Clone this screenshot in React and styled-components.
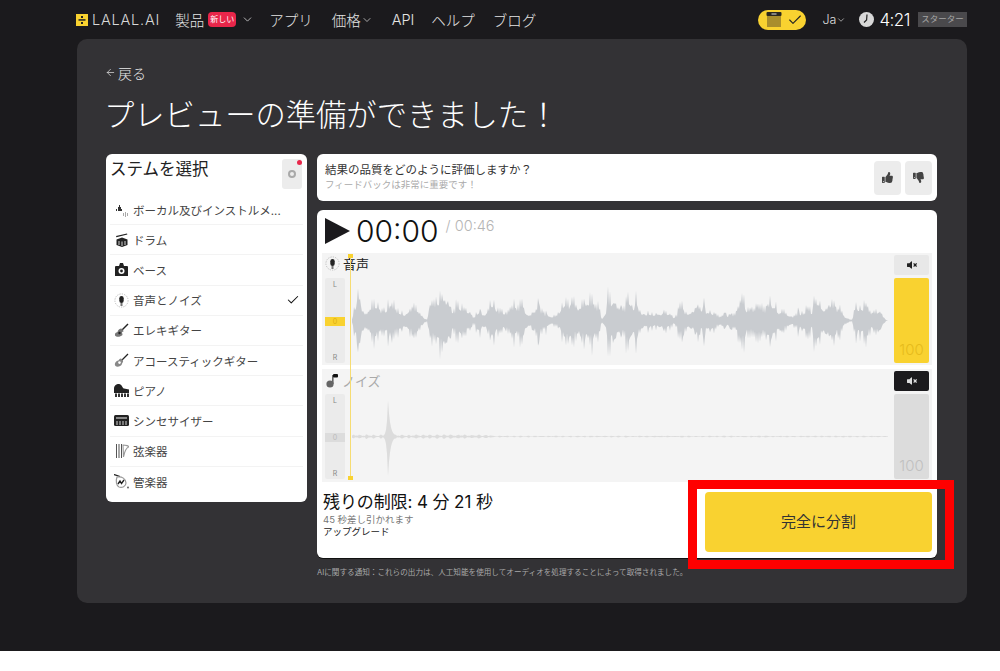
import React from 'react';
import styled, { createGlobalStyle } from 'styled-components';
import { ChevronDown, ArrowLeft, Check } from 'lucide-react';
import { FaThumbsUp, FaThumbsDown, FaVolumeMute } from 'react-icons/fa';

const FONT = `Inter, "Noto Sans CJK JP", "Noto Sans", sans-serif`;

const GlobalStyle = createGlobalStyle`
  html, body { margin: 0; padding: 0; background: #fff; }
  body { font-family: ${FONT}; }
  * { box-sizing: border-box; }
`;

const Page = styled.div`
  position: relative;
  width: 1000px;
  height: 651px;
  background: #1b1a1d;
  overflow: hidden;
`;

const Header = styled.header`
  height: 39px;
  padding: 0 33px 0 76px;
  display: flex;
  align-items: center;
  justify-content: space-between;
`;

const HeaderSide = styled.div`
  display: flex;
  align-items: center;
`;

const Brand = styled.div`
  display: flex;
  align-items: center;
  gap: 4px;
  margin-right: 15px;
  color: #d8d8d8;
  font-size: 14.5px;
  font-weight: 300;
  letter-spacing: 0.8px;
`;

const NavItem = styled.span`
  display: flex;
  align-items: center;
  margin-right: ${(p) => p.$gap}px;
  color: #e4e4e4;
  font-size: 14.5px;
  font-weight: 300;
  white-space: nowrap;
`;

const NewBadge = styled.span`
  width: 28px;
  height: 15px;
  margin: 0 5px 0 4px;
  border-radius: 4px;
  background: #e8264a;
  color: #fff;
  font-size: 8px;
  line-height: 15px;
  text-align: center;
`;

const Toggle = styled.div`
  width: 48px;
  height: 20px;
  margin-right: 16px;
  padding: 0 3px 0 8px;
  border-radius: 10px;
  background: #f9d230;
  display: flex;
  align-items: center;
  justify-content: space-between;
  color: #222;
`;

const LangPick = styled.span`
  display: flex;
  align-items: center;
  width: 37px;
  color: #ddd;
  font-size: 12.5px;
  font-weight: 300;
`;

const Clock = styled.span`
  color: #fff;
  font-size: 17px;
  font-weight: 300;
  letter-spacing: -0.5px;
  margin: 0 8px 0 5px;
`;

const PlanTag = styled.span`
  width: 49px;
  height: 15px;
  background: #4a494c;
  color: #a5a5a5;
  font-size: 8.5px;
  line-height: 15px;
  text-align: center;
`;

const Card = styled.main`
  width: 890px;
  height: 564px;
  margin-left: 77px;
  padding: 24px 30px 0 29px;
  border-radius: 10px;
  background: #333235;
`;

const BackLink = styled.div`
  display: flex;
  align-items: center;
  gap: 2px;
  height: 19px;
  margin-left: -1px;
  color: #e8e8e8;
  font-size: 14px;
  font-weight: 300;
`;

const Title = styled.h1`
  margin: 15px 0 20px -2px;
  height: 37px;
  color: #fff;
  font-size: 30.3px;
  line-height: 37px;
  font-weight: 300;
  white-space: nowrap;
`;

const Columns = styled.div`
  display: flex;
  align-items: flex-start;
  gap: 10px;
`;

const StemPanel = styled.aside`
  width: 201px;
  height: 348px;
  border-radius: 6px;
  background: #fff;
  padding: 5px 4px 0 4px;
`;

const StemHead = styled.div`
  display: flex;
  justify-content: space-between;
  height: 36px;
`;

const StemTitle = styled.div`
  color: #222;
  font-size: 16.5px;
  font-weight: 400;
  line-height: 20px;
`;

const SettingsBtn = styled.div`
  position: relative;
  width: 20px;
  height: 30px;
  margin-right: 1px;
  border-radius: 3px;
  background: #ececec;
  display: flex;
  align-items: center;
  justify-content: center;
  &::before {
    content: '';
    width: 4px;
    height: 4px;
    border: 2px solid #a9a9a9;
    border-radius: 50%;
  }
  &::after {
    content: '';
    position: absolute;
    top: 1px;
    right: 0;
    width: 5px;
    height: 5px;
    border-radius: 50%;
    background: #e8264a;
  }
`;

const StemRow = styled.div`
  height: 30.2px;
  display: flex;
  align-items: center;
  gap: 3px;
  padding: 0 3px 0 3px;
  color: #444;
  font-size: 11.5px;
  font-weight: 400;
  white-space: nowrap;
  border-bottom: ${(p) => (p.$last ? 'none' : '1px solid #f3f3f3')};
`;

const StemLabel = styled.span`
  flex: 1;
`;

const IconSlot = styled.span`
  width: 17px;
  height: 17px;
  flex: none;
  display: flex;
  align-items: center;
  justify-content: center;
  color: #222;
`;

const RightCol = styled.div`
  width: 620px;
  display: flex;
  flex-direction: column;
  gap: 9px;
`;

const FeedbackCard = styled.section`
  height: 47px;
  padding: 0 5px 0 8px;
  border-radius: 6px;
  background: #fff;
  display: flex;
  align-items: center;
  justify-content: space-between;
`;

const FeedbackText = styled.div`
  color: #333;
  font-size: 11.5px;
  font-weight: 400;
  line-height: 15px;
  margin-top: -1px;
  small {
    display: block;
    color: #aaa;
    font-size: 9.5px;
    line-height: 13px;
  }
`;

const ThumbGroup = styled.div`
  display: flex;
  gap: 4px;
`;

const ThumbBtn = styled.div`
  width: 27px;
  height: 34px;
  border-radius: 4px;
  background: #ececec;
  color: #444;
  display: flex;
  align-items: center;
  justify-content: center;
`;

const PlayerCard = styled.section`
  height: 348px;
  border-radius: 6px;
  background: #fff;
  box-shadow: 0 1px 0 #111;
`;

const TimeRow = styled.div`
  height: 43px;
  padding: 6px 0 0 8px;
  display: flex;
  align-items: flex-start;
  color: #111;
`;

const PlayIcon = styled.div`
  width: 0;
  height: 0;
  margin: 2px 6px 0 0;
  border-style: solid;
  border-width: 13px 0 13px 25px;
  border-color: transparent transparent transparent #1b1a1d;
`;

const TimeNow = styled.span`
  font-size: 30px;
  font-weight: 300;
  line-height: 30px;
`;

const TimeTotal = styled.span`
  margin: 1px 0 0 7px;
  color: #b5b5b5;
  font-size: 14.5px;
  font-weight: 300;
`;

const Tracks = styled.div`
  position: relative;
  margin: 0 5px;
  display: flex;
  flex-direction: column;
  gap: 4px;
`;

const Playhead = styled.div`
  position: absolute;
  left: 27.5px;
  top: 1px;
  bottom: 2px;
  width: 1.5px;
  background: #f6dc72;
  &::before, &::after {
    content: '';
    position: absolute;
    left: -2px;
    width: 5px;
    height: 4px;
    background: #f9d230;
  }
  &::before { top: 0; }
  &::after { bottom: 0; }
`;

const Track = styled.div`
  height: ${(p) => p.$height}px;
  padding: 2px 3px 0 3px;
  background: #f4f4f4;
  display: grid;
  grid-template-columns: 20px 536px 35px;
  column-gap: 6.5px;
`;

const Side = styled.div`
  display: flex;
  flex-direction: column;
`;

const TrackName = styled.div`
  height: 23px;
  padding-bottom: ${(p) => (p.$muted ? 4 : 6)}px;
  display: flex;
  align-items: center;
  gap: 3px;
  white-space: nowrap;
  color: ${(p) => (p.$muted ? '#aaa' : '#222')};
  font-size: 13px;
  font-weight: 400;
  svg { flex: none; }
`;

const Meter = styled.div`
  height: 85px;
  border-radius: 2px;
  background: #ebebeb;
  display: flex;
  flex-direction: column;
  justify-content: space-between;
  align-items: center;
  padding: 2px 0 1px;
  color: #888;
  font-size: 7px;
  line-height: 9px;
`;

const ZeroMark = styled.span`
  width: 100%;
  height: 9px;
  background: ${(p) => (p.$active ? '#f9d230' : '#dcdcdc')};
  color: ${(p) => (p.$active ? '#dcae10' : '#bbb')};
  text-align: center;
`;

const WaveWrap = styled.div`
  padding-top: 23px;
`;

const MuteBtn = styled.div`
  height: 20px;
  border-radius: 2px;
  background: ${(p) => (p.$on ? '#1b1a1d' : '#e8e8e8')};
  color: ${(p) => (p.$on ? '#ddd' : '#222')};
  display: flex;
  align-items: center;
  justify-content: center;
`;

const Fader = styled.div`
  height: 85px;
  margin-top: 3px;
  border-radius: 2px;
  background: ${(p) => (p.$on ? '#f9d230' : '#dcdcdc')};
  color: ${(p) => (p.$on ? '#e6bb1c' : '#c0c0c0')};
  font-size: 15px;
  font-weight: 300;
  text-align: center;
  display: flex;
  align-items: flex-end;
  justify-content: center;
  padding-bottom: 4px;
`;

const Footer = styled.div`
  height: 76px;
  padding: 10px 5px 0 6px;
  display: flex;
  justify-content: space-between;
`;

const LimitText = styled.div`
  color: #777;
  font-size: 9.5px;
  font-weight: 400;
  line-height: 12px;
`;

const LimitTitle = styled.div`
  color: #111;
  font-size: 17px;
  font-weight: 400;
  letter-spacing: -0.1px;
  line-height: 21px;
  margin-bottom: 1px;
`;

const UpgradeLink = styled.div`
  color: #222;
`;

const SplitBtn = styled.button`
  width: 227px;
  height: 60px;
  padding: 0 0 3px;
  border: none;
  border-radius: 4px;
  background: #f9d230;
  color: #333;
  font-family: ${FONT};
  font-size: 15px;
`;

const Note = styled.p`
  margin: 1px 0 0;
  color: #a8a8a8;
  font-size: 7.6px;
  font-weight: 400;
  line-height: 10px;
`;

const RedFrame = styled.div`
  position: absolute;
  left: 688px;
  top: 480px;
  width: 266px;
  height: 89px;
  border: 9px solid #ff0000;
  pointer-events: none;
`;

const rng = (seed) => {
  let s = seed;
  return () => {
    s = (s * 16807) % 2147483647;
    return (s - 1) / 2147483646;
  };
};

// amplitude control points for the voice track: [x, amp]
const VOICE_ENV = [
  [0, 4], [3, 30], [9, 26], [14, 10], [22, 24], [32, 20], [46, 14], [52, 8], [60, 15], [68, 10], [72, 2], [75, 1],
  [78, 24], [95, 26], [108, 15], [122, 6], [126, 11], [140, 19], [152, 8], [160, 17], [172, 15], [178, 6],
  [186, 26], [196, 7], [204, 4], [212, 21], [238, 21], [246, 24], [250, 4], [256, 24], [268, 20], [282, 22],
  [292, 15], [300, 9], [312, 18], [322, 7], [332, 17], [345, 16], [355, 18], [368, 7], [378, 10], [386, 15],
  [390, 32], [396, 20], [410, 18], [420, 22], [430, 11], [440, 8], [452, 18], [470, 18], [484, 20], [494, 3],
  [500, 1], [504, 15], [516, 18], [528, 15], [534, 1], [536, 0],
];

const envAt = (env, x) => {
  for (let i = 1; i < env.length; i += 1) {
    if (x <= env[i][0]) {
      const [x0, a0] = env[i - 1];
      const [x1, a1] = env[i];
      return a0 + ((a1 - a0) * (x - x0)) / (x1 - x0 || 1);
    }
  }
  return 0;
};

const buildVoicePath = () => {
  const rand = rng(4217);
  const top = [];
  const bottom = [];
  let burst = 1;
  let burstEnd = 0;
  for (let x = 0; x <= 536; x += 1) {
    if (x >= burstEnd) {
      burst = 0.5 + rand() * 0.6;
      burstEnd = x + 2 + Math.floor(rand() * 5);
    }
    const amp = envAt(VOICE_ENV, x) * burst;
    const tall = x % 2 === 0 && rand() > 0.5;
    const up = amp * (tall ? 1.05 + rand() * 0.3 : 0.6 + rand() * 0.25);
    const down = amp * (tall ? 1.15 + rand() * 0.5 : 0.65 + rand() * 0.3);
    top.push(`${x},${(42.5 - up).toFixed(1)}`);
    bottom.unshift(`${x},${(42.5 + down).toFixed(1)}`);
  }
  return `M${top.join(' L')} L${bottom.join(' L')} Z`;
};

const buildNoisePath = () => {
  const rand = rng(991);
  const top = [];
  const bottom = [];
  for (let x = 0; x <= 536; x += 1) {
    const spike = x >= 36 ? 36 * Math.exp(-(x - 36) / 2.2) : 36 * Math.exp((x - 36) / 1.2);
    const bed = (x < 140 ? 1.8 : 0.7) * (x % 7 < 3 ? 1 : 0.45) * (0.6 + rand() * 0.6);
    const amp = Math.max(spike, bed);
    top.push(`${x},${(42.5 - amp).toFixed(1)}`);
    bottom.unshift(`${x},${(42.5 + amp * 1.1).toFixed(1)}`);
  }
  return `M${top.join(' L')} L${bottom.join(' L')} Z`;
};

const voicePath = buildVoicePath();
const noisePath = buildNoisePath();

const Wave = ({ d, color }) => (
  <svg width="536" height="85" viewBox="0 0 536 85" style={{ display: 'block', overflow: 'visible' }}>
    <path d={d} fill={color} />
  </svg>
);

const Logo = () => (
  <svg width="12" height="12" viewBox="0 0 12 12">
    <rect width="12" height="12" fill="#f9d230" />
    <rect x="2.5" y="5.2" width="7" height="1.5" fill="#222" />
    <rect x="5" y="2" width="2" height="2" fill="#222" />
    <rect x="5" y="8" width="2" height="2" fill="#222" />
  </svg>
);

const ClockIcon = () => (
  <svg width="15" height="15" viewBox="0 0 15 15">
    <circle cx="7.5" cy="7.5" r="7.5" fill="#d8d8d8" />
    <path d="M8 2.5 L7.6 8 L5 10.5" stroke="#222" strokeWidth="1.2" fill="none" />
  </svg>
);

const BoxIcon = () => (
  <svg width="16" height="15" viewBox="0 0 16 15">
    <rect x="0.5" y="0" width="15" height="4" rx="1" fill="#2b2820" />
    <rect x="1" y="4" width="14" height="11" fill="#a98e2c" />
    <rect x="5.5" y="1.5" width="5" height="1" fill="#ddd" />
  </svg>
);

const MicIcon = () => (
  <svg width="15" height="15" viewBox="0 0 15 15">
    <circle cx="7.5" cy="7.5" r="6.6" fill="none" stroke="#bbb" strokeWidth="1" strokeDasharray="1.2 1.2" />
    <rect x="5.3" y="3" width="4.4" height="7" rx="2.2" fill="#222" />
    <rect x="6.5" y="10" width="2" height="3" fill="#777" />
  </svg>
);

const NoteIcon = () => (
  <svg width="14" height="15" viewBox="0 0 14 15">
    <circle cx="5" cy="11" r="3.6" fill="#666" />
    <rect x="7" y="2" width="1.6" height="9" fill="#666" />
    <rect x="8" y="1" width="5" height="3.4" rx="1" fill="#111" />
  </svg>
);

const STEM_ICONS = {
  mix: (
    <svg width="16" height="14" viewBox="0 0 16 14">
      <path d="M0 8h2V6h1v2h1V4h1v-2h1v2h1v2h1v2H0z" fill="#333" />
      <path d="M9 10h1v3H9zM11 9h1v5h-1zM13 10h1v3h-1z" fill="#aaa" />
    </svg>
  ),
  drums: (
    <svg width="14" height="14" viewBox="0 0 14 14">
      <path d="M1 3 L12 0.5 L12.4 1.6 L1.4 4.2z" fill="#222" />
      <path d="M1.5 6.5 L7 4.5 L12.5 6.5 V12 L7 14 L1.5 12z" fill="#222" />
      <path d="M4 8v4M7 8.5v4.5M10 8v4" stroke="#fff" strokeWidth="0.8" />
    </svg>
  ),
  bass: (
    <svg width="13" height="15" viewBox="0 0 13 15">
      <path d="M1 4h3l1-3h3l1 3h3a1 1 0 0 1 1 1v9H0V5a1 1 0 0 1 1-1z" fill="#222" />
      <circle cx="6.5" cy="9" r="3" fill="#fff" />
      <circle cx="6.5" cy="9" r="1.4" fill="#222" />
    </svg>
  ),
  mic: <MicIcon />,
  electric: (
    <svg width="15" height="15" viewBox="0 0 15 15">
      <path d="M14 1 L7.5 7.5" stroke="#222" strokeWidth="1.4" />
      <path d="M7 5.5 C8.5 6 9.5 7 9.5 8.5 L8 9 L8.5 12 C6 14.5 2 14 1 12.5 C0.5 10 2 9.5 3.5 9 C4 7 5 6 7 5.5z" fill="#777" />
      <circle cx="5.5" cy="10" r="1.2" fill="#222" />
    </svg>
  ),
  acoustic: (
    <svg width="15" height="15" viewBox="0 0 15 15">
      <path d="M14 1 L7 8" stroke="#222" strokeWidth="1.3" />
      <path d="M6.5 5.5 C8.5 6 9.5 7.5 9 9 C8.5 10 8 10 8 11 C7 13.5 3 14.5 1.5 13 C0 11.5 1.5 8.5 3.5 7.8 C5 7.5 5 6 6.5 5.5z" fill="#888" />
      <circle cx="5.5" cy="9.6" r="1.3" fill="#fff" />
    </svg>
  ),
  piano: (
    <svg width="15" height="13" viewBox="0 0 15 13">
      <path d="M0 5 C0 1.5 2 0 5 0 C8 0 8 4 10 4.5 L15 5.5 V9 H0z" fill="#222" />
      <path d="M1 9.5h2V13H1zM4 9.5h2V13H4zM7 9.5h2V13H7zM10 9.5h2V13h-2zM13 9.5h2V13h-2z" fill="#333" />
    </svg>
  ),
  synth: (
    <svg width="15" height="11" viewBox="0 0 15 11">
      <rect width="15" height="11" rx="1.5" fill="#222" />
      <rect x="2" y="2" width="11" height="2" fill="#888" />
      <path d="M3 6v4M6 6v4M9 6v4M12 6v4" stroke="#fff" strokeWidth="0.8" />
    </svg>
  ),
  strings: (
    <svg width="14" height="14" viewBox="0 0 14 14">
      <path d="M1 0h1v14H1zM3.5 0h1v14h-1zM6 0h1v14H6z" fill="#555" />
      <path d="M8 1 C11 1 14 2 13.5 3 C11 4 9.5 8 8.5 13z" fill="none" stroke="#999" strokeWidth="1.1" />
    </svg>
  ),
  winds: (
    <svg width="15" height="15" viewBox="0 0 15 15">
      <path d="M0 0.5 L6 2.5" stroke="#222" strokeWidth="1.3" />
      <path d="M3 3 C8 2 12 5 12 9 C12 12.5 8 14 5 13 C2.5 12 1.5 7 3 3z" fill="none" stroke="#999" strokeWidth="1.2" />
      <path d="M4 10 L6 7 L7.5 9.5 L10 6" stroke="#222" strokeWidth="1.4" fill="none" />
      <circle cx="14" cy="13.5" r="0.9" fill="#555" />
    </svg>
  ),
};

const STEMS = [
  { id: 'mix', label: 'ボーカル及びインストルメ...' },
  { id: 'drums', label: 'ドラム' },
  { id: 'bass', label: 'ベース' },
  { id: 'mic', label: '音声とノイズ', selected: true },
  { id: 'electric', label: 'エレキギター' },
  { id: 'acoustic', label: 'アコースティックギター' },
  { id: 'piano', label: 'ピアノ' },
  { id: 'synth', label: 'シンセサイザー' },
  { id: 'strings', label: '弦楽器' },
  { id: 'winds', label: '管楽器' },
];

const App = () => (
  <Page>
    <GlobalStyle />
    <Header>
      <HeaderSide>
        <Brand><Logo />LALAL.AI</Brand>
        <NavItem $gap={0}>製品</NavItem>
        <NewBadge>新しい</NewBadge>
        <NavItem $gap={15}><ChevronDown size={13} strokeWidth={1.4} /></NavItem>
        <NavItem $gap={19}>アプリ</NavItem>
        <NavItem $gap={19}>価格<ChevronDown size={12} strokeWidth={1.4} /></NavItem>
        <NavItem $gap={17}>API</NavItem>
        <NavItem $gap={18}>ヘルプ</NavItem>
        <NavItem $gap={0}>ブログ</NavItem>
      </HeaderSide>
      <HeaderSide>
        <Toggle><BoxIcon /><Check size={16} strokeWidth={1.6} /></Toggle>
        <LangPick>Ja<ChevronDown size={10} strokeWidth={1.6} /></LangPick>
        <ClockIcon />
        <Clock>4:21</Clock>
        <PlanTag>スターター</PlanTag>
      </HeaderSide>
    </Header>
    <Card>
      <BackLink><ArrowLeft size={11} strokeWidth={1.5} />戻る</BackLink>
      <Title>プレビューの準備ができました！</Title>
      <Columns>
        <StemPanel>
          <StemHead>
            <StemTitle>ステムを選択</StemTitle>
            <SettingsBtn />
          </StemHead>
          {STEMS.map((stem, i) => (
            <StemRow key={stem.id} $last={i === STEMS.length - 1}>
              <IconSlot>{STEM_ICONS[stem.id]}</IconSlot>
              <StemLabel>{stem.label}</StemLabel>
              {stem.selected && <Check size={14} strokeWidth={1.8} color="#111" />}
            </StemRow>
          ))}
        </StemPanel>
        <RightCol>
          <FeedbackCard>
            <FeedbackText>
              結果の品質をどのように評価しますか？
              <small>フィードバックは非常に重要です！</small>
            </FeedbackText>
            <ThumbGroup>
              <ThumbBtn><FaThumbsUp size={11} /></ThumbBtn>
              <ThumbBtn><FaThumbsDown size={11} /></ThumbBtn>
            </ThumbGroup>
          </FeedbackCard>
          <PlayerCard>
            <TimeRow>
              <PlayIcon />
              <TimeNow>00:00</TimeNow>
              <TimeTotal>/ 00:46</TimeTotal>
            </TimeRow>
            <Tracks>
              <Track $height={112}>
                <Side>
                  <TrackName><MicIcon />音声</TrackName>
                  <Meter>
                    <span>L</span>
                    <ZeroMark $active>0</ZeroMark>
                    <span>R</span>
                  </Meter>
                </Side>
                <WaveWrap><Wave d={voicePath} color="#c9ccd0" /></WaveWrap>
                <Side>
                  <MuteBtn><FaVolumeMute size={10} /></MuteBtn>
                  <Fader $on>100</Fader>
                </Side>
              </Track>
              <Track $height={113}>
                <Side>
                  <TrackName $muted><NoteIcon />ノイズ</TrackName>
                  <Meter>
                    <span>L</span>
                    <ZeroMark>0</ZeroMark>
                    <span>R</span>
                  </Meter>
                </Side>
                <WaveWrap><Wave d={noisePath} color="#dcdcdc" /></WaveWrap>
                <Side>
                  <MuteBtn $on><FaVolumeMute size={10} /></MuteBtn>
                  <Fader>100</Fader>
                </Side>
              </Track>
              <Playhead />
            </Tracks>
            <Footer>
              <LimitText>
                <LimitTitle>残りの制限: 4 分 21 秒</LimitTitle>
                45 秒差し引かれます
                <UpgradeLink>アップグレード</UpgradeLink>
              </LimitText>
              <SplitBtn type="button">完全に分割</SplitBtn>
            </Footer>
          </PlayerCard>
          <Note>AIに関する通知：これらの出力は、人工知能を使用してオーディオを処理することによって取得されました。</Note>
        </RightCol>
      </Columns>
    </Card>
    <RedFrame />
  </Page>
);

export default App;
